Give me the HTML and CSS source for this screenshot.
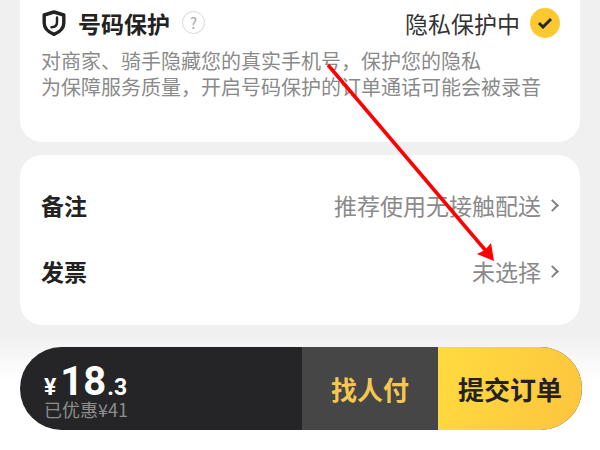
FILE: index.html
```html
<!DOCTYPE html>
<html lang="zh">
<head>
    <title>提交订单</title>
    <link rel="stylesheet" href="styles.css">
</head>
<body>
    <div class="page">
        <section class="card privacy">
            <div class="privacy-head">
                <svg class="shield" width="24" height="26" viewBox="0 0 24 26">
                    <path d="M12 2 L21.800 5 V13 C21.800 18.500 17 22.300 12 24.300 C7 22.300 2.200 18.500 2.200 13 V5 Z" fill="none" stroke="#222" stroke-width="3.400" stroke-linejoin="round"/>
                    <path d="M15 7.500 V12 C15 15.500 12.800 17.300 9.500 17.300" fill="none" stroke="#222" stroke-width="2.400" stroke-linecap="round"/>
                </svg>
                <h2 class="privacy-title">号码保护</h2>
                <span class="help">?</span>
                <span class="privacy-state">隐私保护中</span>
                <span class="check">
                    <svg width="16" height="12" viewBox="0 0 16 12">
                        <path d="M2 6 L6 10 L14 2" fill="none" stroke="#26272b" stroke-width="3"/>
                    </svg>
                </span>
            </div>
            <p class="privacy-desc">对商家、骑手隐藏您的真实手机号，保护您的隐私<br>为保障服务质量，开启号码保护的订单通话可能会被录音</p>
        </section>

        <section class="card options">
            <div class="option">
                <span class="option-name">备注</span>
                <span class="option-value">推荐使用无接触配送</span>
                <span class="chevron"></span>
            </div>
            <div class="option">
                <span class="option-name">发票</span>
                <span class="option-value">未选择</span>
                <span class="chevron"></span>
            </div>
        </section>

        <footer class="footer">
            <div class="paybar">
                <div class="total">
                    <div class="price"><span class="yen">¥</span><span class="whole">18</span><span class="cents">.3</span></div>
                    <div class="saved">已优惠¥41</div>
                </div>
                <div class="friend-pay">找人付</div>
                <div class="submit">提交订单</div>
            </div>
        </footer>
    </div>

    <!-- annotation drawn over the screenshot -->
    <svg class="annotation" width="600" height="450" viewBox="0 0 600 450">
        <path d="M328 65 L486 251" stroke="#fe0000" stroke-width="3.500" fill="none"/>
        <path d="M494 261 L477 254 L485 250 L491 243 Z" fill="#fe0000"/>
    </svg>
</body>
</html>
```

FILE: styles.css
```css
body {
  margin: 0;
  width: 600px;
  height: 450px;
  overflow: hidden;
  background-color: #f0f0f0;
  font-family: "Noto Sans CJK SC", "Liberation Sans", sans-serif;
}

.page {
  height: 450px;
  display: flex;
  flex-direction: column;
}

.card {
  margin: 0 20px;
  background-color: #ffffff;
  border-radius: 22px;
}

.privacy {
  height: 142px;
  padding: 0 21px;
  box-sizing: border-box;
  border-radius: 0 0 22px 22px;
}

.privacy-head {
  height: 45px;
  display: flex;
  align-items: center;
}

.shield {
  margin-left: 1px;
}

.privacy-title {
  margin: 0 0 0 12px;
  font-size: 23px;
  font-weight: 700;
  color: #222222;
}

.help {
  width: 21px;
  height: 21px;
  margin-left: 12px;
  border: 1px solid #d8d8d8;
  border-radius: 50%;
  font-size: 15px;
  line-height: 21px;
  text-align: center;
  color: #aaaaaa;
}

.privacy-state {
  margin-left: auto;
  font-size: 23px;
  color: #333333;
}

.check {
  width: 30px;
  height: 30px;
  margin-left: 10px;
  margin-right: -1px;
  display: flex;
  align-items: center;
  justify-content: center;
  border-radius: 50%;
  background-color: #fdc830;
}

.privacy-desc {
  margin: 3px 0 0;
  font-size: 20px;
  line-height: 26px;
  color: #8a8a8a;
  white-space: nowrap;
}

.options {
  height: 170px;
  margin-top: 13px;
  padding: 17px 21px;
  box-sizing: border-box;
}

.option {
  height: 66px;
  display: flex;
  align-items: center;
}

.option-name {
  font-size: 23px;
  font-weight: 700;
  color: #222222;
}

.option-value {
  margin-left: auto;
  font-size: 23px;
  color: #8a8a8a;
}

.chevron {
  width: 7px;
  height: 7px;
  margin: 0 2px 0 7px;
  border-top: 2.500px solid #808080;
  border-right: 2.500px solid #808080;
  transform: rotate(45deg);
}

.footer {
  height: 115px;
  margin-top: 10px;
  padding-top: 12px;
  box-sizing: border-box;
  background: linear-gradient(#f0f0f0, #ffffff 45px);
}

.paybar {
  height: 83px;
  margin: 0 18px 0 20px;
  display: flex;
  border-radius: 42px;
  overflow: hidden;
  background-color: #252527;
}

.total {
  width: 282px;
  padding: 15px 0 0 24px;
  box-sizing: border-box;
  color: #ffffff;
  font-family: Roboto, "Noto Sans CJK SC", sans-serif;
}

.price {
  height: 36px;
  display: flex;
  align-items: baseline;
  font-weight: 700;
  line-height: 40px;
}

.yen {
  font-size: 23px;
  margin-right: 4px;
}

.whole {
  font-size: 40px;
}

.cents {
  font-size: 23px;
  margin-left: 1px;
}

.saved {
  font-size: 18px;
  line-height: 22px;
  color: #8c8c8c;
  font-family: "Noto Sans CJK SC", Roboto, sans-serif;
}

.friend-pay,
.submit {
  display: flex;
  align-items: center;
  justify-content: center;
  font-size: 26px;
  font-weight: 700;
}

.friend-pay {
  width: 136px;
  background-color: #464646;
  color: #f6c750;
}

.submit {
  flex: 1;
  background: linear-gradient(110deg, #ffdb3f, #fdc43f);
  color: #222222;
}

.annotation {
  position: absolute;
  top: 0;
  left: 0;
}
```
